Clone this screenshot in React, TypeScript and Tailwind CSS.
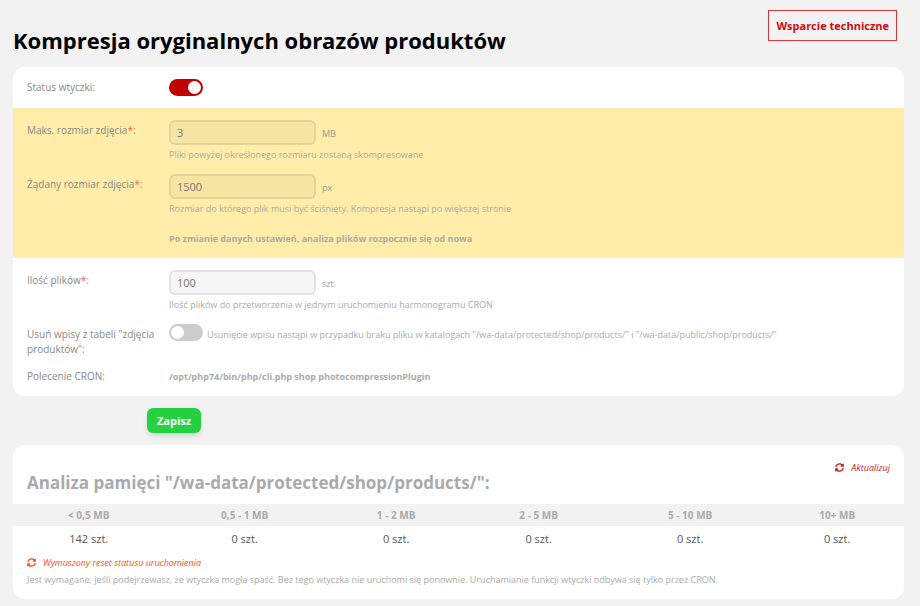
import React, { useState } from 'react';
import { FaSyncAlt } from 'react-icons/fa';

const stats = [
  { range: '< 0,5 MB', count: 142, width: 'w-[17%]' },
  { range: '0,5 - 1 MB', count: 0, width: 'w-[18%]' },
  { range: '1 - 2 MB', count: 0, width: 'w-[16%]' },
  { range: '2 - 5 MB', count: 0, width: 'w-[16%]' },
  { range: '5 - 10 MB', count: 0, width: 'w-[18%]' },
  { range: '10+ MB', count: 0, width: 'w-[15%]' },
];

type ToggleProps = {
  id: string;
  checked: boolean;
  onChange: (value: boolean) => void;
};

const Toggle = ({ id, checked, onChange }: ToggleProps) => (
  <input
    id={id}
    type="checkbox"
    checked={checked}
    onChange={(e) => onChange(e.target.checked)}
    className="block h-[17px] w-[34px] shrink-0 cursor-pointer appearance-none rounded-full bg-[#ccc] p-[2px] before:block before:size-[13px] before:rounded-full before:bg-white before:transition-transform checked:bg-[#c00000] checked:before:translate-x-[17px]"
  />
);

type NumberFieldProps = {
  id: string;
  label: string;
  unit: string;
  hint: string;
  value: string;
  onChange: (value: string) => void;
};

const NumberField = ({ id, label, unit, hint, value, onChange }: NumberFieldProps) => (
  <div className="flex">
    <label htmlFor={id} className="w-[142px] shrink-0 pt-[3px] text-[#888]">
      {label}
      <span className="text-[#f0605a]">*</span>:
    </label>
    <div className="min-w-0 flex-1">
      <div className="flex items-center gap-[6px]">
        <input
          id={id}
          type="text"
          value={value}
          onChange={(e) => onChange(e.target.value)}
          className="h-[25px] w-[147px] rounded-[6px] border-2 border-black/[0.08] bg-black/[0.035] px-[6px] text-[11px] text-[#777] outline-none"
        />
        <span className="pt-[2px] text-[9px] text-[#999]">{unit}</span>
      </div>
      <p className="mt-[2px] text-[9px] text-[#aaa]">{hint}</p>
    </div>
  </div>
);

export default function App() {
  const [enabled, setEnabled] = useState(true);
  const [cleanup, setCleanup] = useState(false);
  const [maxSize, setMaxSize] = useState('3');
  const [targetSize, setTargetSize] = useState('1500');
  const [fileCount, setFileCount] = useState('100');

  return (
    <div className="min-h-screen bg-[#f2f2f2] pr-4 pb-2 pl-[13px] font-['Open_Sans','Noto_Sans',sans-serif] text-[10px] leading-[15px]">
      <header className="flex items-start justify-between pt-[10px] pr-[7px]">
        <h1 className="pt-[14px] pb-[2px] text-[22px] leading-[32px] font-bold text-black">
          Kompresja oryginalnych obrazów produktów
        </h1>
        <a
          href="#support"
          className="border border-[#d9363b] p-[7px] text-[11px] font-bold text-[#cc0a10]"
        >
          Wsparcie techniczne
        </a>
      </header>

      <form onSubmit={(e) => e.preventDefault()}>
        <div className="mt-[9px] overflow-hidden rounded-xl bg-white">
          <div className="flex items-center px-[14px] py-3">
            <label htmlFor="status" className="w-[142px] shrink-0 text-[#888]">
              Status wtyczki:
            </label>
            <Toggle id="status" checked={enabled} onChange={setEnabled} />
          </div>

          <div className="space-y-3 bg-[#ffeda9] px-[14px] py-3">
            <NumberField
              id="max-size"
              label="Maks. rozmiar zdjęcia"
              unit="MB"
              hint="Pliki powyżej określonego rozmiaru zostaną skompresowane"
              value={maxSize}
              onChange={setMaxSize}
            />
            <NumberField
              id="target-size"
              label="Żądany rozmiar zdjęcia"
              unit="px"
              hint="Rozmiar do którego plik musi być ściśnięty. Kompresja nastąpi po większej stronie"
              value={targetSize}
              onChange={setTargetSize}
            />
            <p className="pt-[3px] pl-[142px] text-[9px] font-bold text-[#aaa]">
              Po zmianie danych ustawień, analiza plików rozpocznie się od nowa
            </p>
          </div>

          <div className="space-y-3 px-[14px] py-3">
            <NumberField
              id="file-count"
              label="Ilość plików"
              unit="szt."
              hint="Ilość plików do przetworzenia w jednym uruchomieniu harmonogramu CRON"
              value={fileCount}
              onChange={setFileCount}
            />
            <div className="flex">
              <label htmlFor="cleanup" className="w-[142px] shrink-0 pt-[3px] pr-2 text-[#888]">
                Usuń wpisy z tabeli "zdjęcia produktów":
              </label>
              <div className="flex min-w-0 flex-1 items-start gap-1">
                <Toggle id="cleanup" checked={cleanup} onChange={setCleanup} />
                <p className="pt-[3px] text-[9px] text-[#aaa]">
                  Usunięcie wpisu nastąpi w przypadku braku pliku w katalogach "/wa-data/protected/shop/products/" i
                  "/wa-data/public/shop/products/"
                </p>
              </div>
            </div>
            <div className="flex">
              <span className="w-[142px] shrink-0 text-[#888]">Polecenie CRON:</span>
              <span className="text-[9px] font-bold text-[#aaa]">
                /opt/php74/bin/php/cli.php shop photocompressionPlugin
              </span>
            </div>
          </div>
        </div>

        <button
          type="submit"
          className="mt-3 ml-[134px] block h-[25px] rounded-[6px] bg-[#26d141] px-[10px] text-[11px] font-bold text-white shadow-md shadow-black/10"
        >
          Zapisz
        </button>
      </form>

      <section className="mt-3 overflow-hidden rounded-xl bg-white pb-3">
        <div className="flex items-start justify-between px-[14px] pt-[15px] pb-[9px]">
          <h2 className="pt-[10px] text-[17px] leading-[25px] font-bold text-[#aaa]">
            Analiza pamięci "/wa-data/protected/shop/products/":
          </h2>
          <button type="button" className="flex items-center gap-[7px] text-[9px] text-[#c9171c] italic">
            <FaSyncAlt className="size-[9px]" />
            Aktualizuj
          </button>
        </div>

        <table className="w-full table-fixed text-center">
          <thead>
            <tr className="h-[22px] bg-[#f2f2f2] text-[#aaa]">
              {stats.map((stat) => (
                <th key={stat.range} scope="col" className={`${stat.width} font-bold`}>
                  {stat.range}
                </th>
              ))}
            </tr>
          </thead>
          <tbody>
            <tr className="h-[25px] text-[11px] text-[#555]">
              {stats.map((stat) => (
                <td key={stat.range}>{stat.count} szt.</td>
              ))}
            </tr>
          </tbody>
        </table>

        <div className="px-[14px] pt-1">
          <button type="button" className="flex items-center gap-[7px] text-[9px] text-[#ff4d0d] italic">
            <FaSyncAlt className="size-[9px]" />
            Wymuszony reset statusu uruchomienia
          </button>
          <p className="mt-[2px] text-[9px] text-[#aaa]">
            Jest wymagane, jeśli podejrzewasz, że wtyczka mogła spaść. Bez tego wtyczka nie uruchomi się ponownie.
            Uruchamianie funkcji wtyczki odbywa się tylko przez CRON.
          </p>
        </div>
      </section>
    </div>
  );
}
